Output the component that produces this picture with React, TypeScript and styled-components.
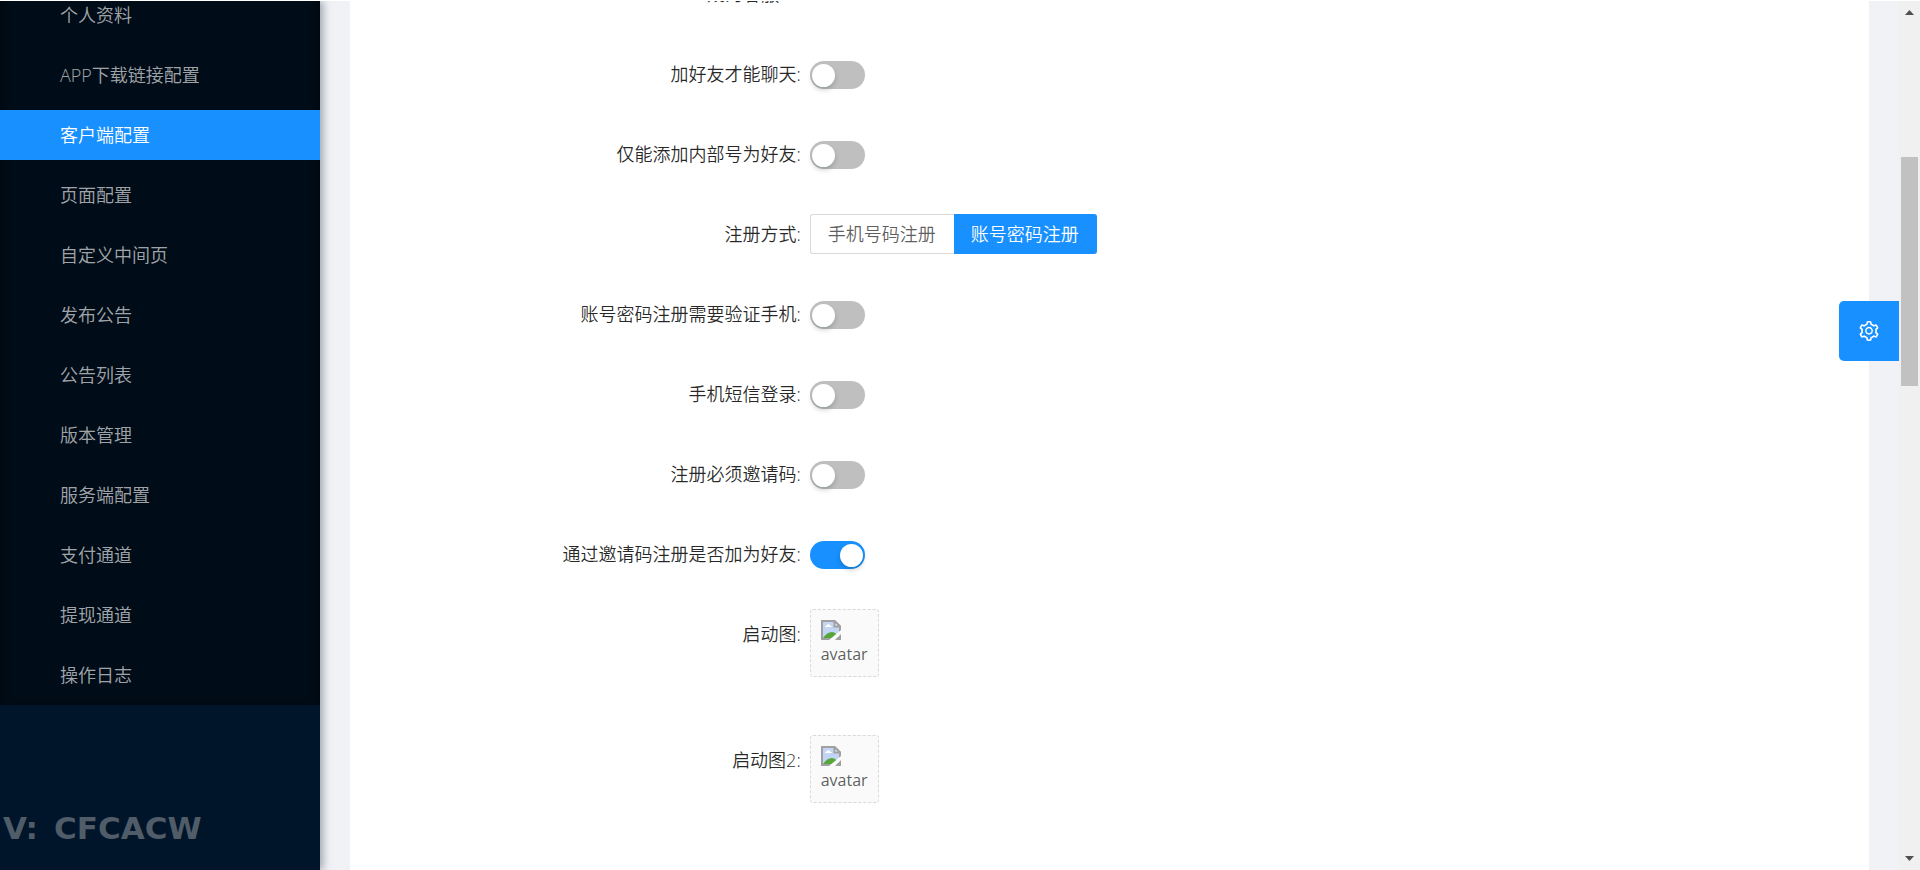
import React from 'react';
import styled, { createGlobalStyle } from 'styled-components';

const GlobalStyle = createGlobalStyle`
  *, *::before, *::after { box-sizing: border-box; }
  body {
    margin: 0;
    background: #fff;
    overflow: hidden;
    font-family: "Open Sans", "Noto Sans CJK SC", sans-serif;
    font-weight: 350;
    font-size: 18px;
    line-height: 28px;
    color: rgba(0, 0, 0, 0.65);
  }
`;

const Shell = styled.div`
  display: grid;
  grid-template-columns: 320px minmax(0, 1fr) 21px;
  height: 100vh;
  border-top: 1px solid #fff;
  overflow: hidden;
`;

const Sidebar = styled.aside`
  position: relative;
  z-index: 1;
  display: flex;
  flex-direction: column;
  justify-content: space-between;
  min-height: 0;
  background: #001529;
  box-shadow: 3px 0 8px rgba(0, 21, 41, 0.35);
`;

const MenuViewport = styled.nav`
  overflow: hidden;
`;

const MenuList = styled.ul`
  list-style: none;
  margin: -16px 0 0;
  padding: 0;
  background: #000c17;
  box-shadow: inset 0 3px 10px rgba(0, 0, 0, 0.45);
`;

const MenuItem = styled.li`
  padding: 5px 0;
`;

const MenuLink = styled.a<{ $active?: boolean }>`
  display: block;
  padding-left: 60px;
  line-height: 50px;
  text-decoration: none;
  white-space: nowrap;
  color: ${(p) => (p.$active ? '#fff' : 'rgba(255, 255, 255, 0.65)')};
  background: ${(p) => (p.$active ? '#1890ff' : 'transparent')};
`;

const Watermark = styled.p`
  display: flex;
  gap: 16px;
  margin: 0 0 22px 3px;
  font: bold 31px/40px "DejaVu Sans", sans-serif;
  color: #505d69;
`;

const Content = styled.main`
  min-width: 0;
  padding: 0 30px;
  background: #f0f2f5;
  overflow: hidden;
`;

const Card = styled.form`
  min-height: 100%;
  padding: 0 40px;
  background: #fff;
  overflow: hidden;
`;

const Rows = styled.div`
  display: grid;
  row-gap: 30px;
  margin-top: -32px;
`;

const Row = styled.div`
  display: grid;
  grid-template-columns: 7fr 17fr;
  align-items: start;
`;

const Label = styled.label`
  padding-right: 9px;
  line-height: 50px;
  text-align: right;
  white-space: nowrap;
  color: rgba(0, 0, 0, 0.85);
  &::after { content: ":"; }
`;

const Control = styled.div`
  display: flex;
  align-items: center;
  min-height: 50px;
`;

const Switch = styled.input`
  appearance: none;
  display: flex;
  align-items: center;
  width: 55px;
  height: 28px;
  margin: 2px 0 0;
  padding: 2px;
  border-radius: 14px;
  background: #bfbfbf;
  cursor: pointer;
  &::before {
    content: "";
    width: 23px;
    height: 23px;
    border-radius: 50%;
    background: #fff;
    box-shadow: 0 3px 5px rgba(0, 35, 11, 0.2);
  }
  &:checked { justify-content: flex-end; background: #1890ff; }
`;

const Segments = styled.div`
  display: flex;
  height: 40px;
`;

const Segment = styled.button<{ $active?: boolean }>`
  padding: 0 18px 0 17px;
  font: inherit;
  white-space: nowrap;
  cursor: pointer;
  border: 1px solid ${(p) => (p.$active ? '#1890ff' : '#d9d9d9')};
  border-width: ${(p) => (p.$active ? '1px 0' : '1px 0 1px 1px')};
  border-radius: ${(p) => (p.$active ? '0 3px 3px 0' : '3px 0 0 3px')};
  background: ${(p) => (p.$active ? '#1890ff' : '#fff')};
  color: ${(p) => (p.$active ? '#fff' : 'rgba(0, 0, 0, 0.65)')};
`;

const Upload = styled.button`
  display: flex;
  flex-direction: column;
  align-items: flex-start;
  height: 68px;
  margin-bottom: 28px;
  padding: 10px;
  font: inherit;
  font-size: 16px;
  font-weight: 400;
  line-height: 28px;
  color: rgba(0, 0, 0, 0.65);
  border: 1px dashed #d9d9d9;
  border-radius: 3px;
  background: #fafafa;
  cursor: pointer;
  svg { flex: none; }
`;

const SettingsButton = styled.button`
  position: fixed;
  z-index: 2;
  top: 301px;
  right: 21px;
  display: grid;
  place-items: center;
  width: 60px;
  height: 60px;
  padding: 0;
  border: 0;
  border-radius: 5px 0 0 5px;
  background: #1890ff;
  cursor: pointer;
`;

const ScrollTrack = styled.div`
  display: flex;
  flex-direction: column;
  align-items: center;
  padding: 9px 0;
  background: #f0f0f0;
`;

const ScrollThumb = styled.div`
  width: 17px;
  height: 229px;
  margin: 142px 0 auto;
  background: #c1c1c1;
`;

const menu = [
  '个人资料', 'APP下载链接配置', '客户端配置', '页面配置', '自定义中间页', '发布公告',
  '公告列表', '版本管理', '服务端配置', '支付通道', '提现通道', '操作日志',
];

function SwitchRow({ id, label, on }: { id: string; label: string; on?: boolean }) {
  return (
    <Row>
      <Label htmlFor={id}>{label}</Label>
      <Control><Switch id={id} type="checkbox" role="switch" defaultChecked={on} /></Control>
    </Row>
  );
}

function BrokenImage() {
  return (
    <svg width="20" height="20" viewBox="0 0 20 20" aria-hidden="true">
      <path d="M1 1h12.500L19 6.500V19H1z" fill="#c3d5f5" stroke="#a0a0a0" strokeWidth="2" />
      <path d="M4 7q0-1.500 1.500-1.500Q6.500 3.500 8.500 4.500q1 .5 1 1.500Q11 6 11 7z" fill="#fff" />
      <path d="M2 18q4-6 9-6 4 0 7 6z" fill="#57a639" />
      <path d="M13.500 1v5.500H19z" fill="#fff" stroke="#a0a0a0" strokeWidth="2" />
      <path d="M20 10v4l-6 6H8z" fill="#fafafa" />
    </svg>
  );
}

function UploadRow({ id, label }: { id: string; label: string }) {
  return (
    <Row>
      <Label htmlFor={id}>{label}</Label>
      <Control><Upload id={id} type="button"><BrokenImage />avatar</Upload></Control>
    </Row>
  );
}

function Gear() {
  return (
    <svg width="20" height="20" viewBox="64 64 896 896" fill="#fff" aria-hidden="true">
      <path d="M924.8 625.7l-65.5-56c3.1-19 4.7-38.4 4.7-57.8s-1.6-38.8-4.7-57.8l65.5-56a32.03 32.03 0 0 0 9.3-35.2l-.9-2.6a443.74 443.74 0 0 0-79.7-137.9l-1.8-2.1a32.12 32.12 0 0 0-35.1-9.5l-81.3 28.9c-30-24.6-63.5-44-99.7-57.6l-15.7-85a32.05 32.05 0 0 0-25.8-25.7l-2.7-.5c-52.1-9.4-106.9-9.4-159 0l-2.7.5a32.05 32.05 0 0 0-25.8 25.7l-15.8 85.4a351.86 351.86 0 0 0-99 57.4l-81.9-29.1a32 32 0 0 0-35.1 9.5l-1.8 2.1a446.02 446.02 0 0 0-79.7 137.9l-.9 2.6c-4.5 12.5-.8 26.5 9.3 35.2l66.3 56.6c-3.1 18.8-4.6 38-4.6 57.1 0 19.2 1.5 38.4 4.6 57.1L99 625.500a32.03 32.03 0 0 0-9.3 35.200l.9 2.600c18.100 50.400 44.900 96.900 79.700 137.900l1.800 2.100a32.120 32.120 0 0 0 35.100 9.500l81.900-29.100c29.800 24.500 63.100 43.900 99 57.400l15.800 85.400a32.050 32.050 0 0 0 25.800 25.700l2.700.5a449.400 449.400 0 0 0 159 0l2.700-.5a32.050 32.050 0 0 0 25.800-25.700l15.700-85a350 350 0 0 0 99.700-57.600l81.300 28.900a32 32 0 0 0 35.100-9.500l1.800-2.100c34.800-41.100 61.600-87.500 79.700-137.900l.9-2.600c4.500-12.300.8-26.300-9.300-35zM788.300 465.900c2.500 15.100 3.800 30.600 3.800 46.100s-1.300 31-3.800 46.100l-6.600 40.100 74.700 63.900a370.030 370.030 0 0 1-42.600 73.600L721 702.800l-31.400 25.800c-23.900 19.600-50.500 35-79.300 45.800l-38.100 14.300-17.900 97a377.500 377.500 0 0 1-85 0l-17.900-97.200-37.800-14.500c-28.500-10.800-55-26.200-78.700-45.700l-31.400-25.900-93.400 33.200c-17-22.900-31.200-47.600-42.600-73.600l75.500-64.500-6.500-40c-2.400-14.900-3.700-30.300-3.700-45.500 0-15.300 1.200-30.600 3.700-45.500l6.500-40-75.500-64.500c11.300-26.100 25.600-50.700 42.600-73.600l93.400 33.200 31.400-25.900c23.700-19.500 50.200-34.900 78.700-45.700l37.900-14.300 17.900-97.200c28.100-3.200 56.800-3.200 85 0l17.900 97 38.100 14.300c28.700 10.800 55.400 26.200 79.300 45.800l31.400 25.800 92.800-32.900c17 22.900 31.200 47.600 42.600 73.600L781.800 426l6.500 39.900zM512 326c-97.200 0-176 78.800-176 176s78.800 176 176 176 176-78.800 176-176-78.800-176-176-176zm79.200 255.200A111.600 111.600 0 0 1 512 614c-29.900 0-58-11.700-79.200-32.800A111.600 111.600 0 0 1 400 502c0-29.900 11.700-58 32.800-79.200C454 401.600 482.100 390 512 390c29.900 0 58 11.600 79.200 32.800A111.600 111.600 0 0 1 624 502c0 29.900-11.700 58-32.800 79.200z" />
    </svg>
  );
}

export default function App() {
  return (
    <>
      <GlobalStyle />
      <Shell>
        <Sidebar>
          <MenuViewport>
            <MenuList>
              {menu.map((name) => (
                <MenuItem key={name}>
                  <MenuLink href="#" $active={name === '客户端配置'}>{name}</MenuLink>
                </MenuItem>
              ))}
            </MenuList>
          </MenuViewport>
          <Watermark><span>V:</span><span>CFCACW</span></Watermark>
        </Sidebar>
        <Content>
          <Card>
            <Rows>
              <Row><Label as="span">成为客服ID</Label></Row>
              <SwitchRow id="friend-chat" label="加好友才能聊天" />
              <SwitchRow id="internal-only" label="仅能添加内部号为好友" />
              <Row>
                <Label as="span" id="register-mode">注册方式</Label>
                <Control>
                  <Segments role="group" aria-labelledby="register-mode">
                    <Segment type="button">手机号码注册</Segment>
                    <Segment type="button" $active>账号密码注册</Segment>
                  </Segments>
                </Control>
              </Row>
              <SwitchRow id="verify-phone" label="账号密码注册需要验证手机" />
              <SwitchRow id="sms-login" label="手机短信登录" />
              <SwitchRow id="invite-required" label="注册必须邀请码" />
              <SwitchRow id="invite-friend" label="通过邀请码注册是否加为好友" on />
              <UploadRow id="splash-1" label="启动图" />
              <UploadRow id="splash-2" label="启动图2" />
            </Rows>
          </Card>
        </Content>
        <ScrollTrack aria-hidden="true">
          <svg width="9" height="5" viewBox="0 0 9 5"><path d="M0 5 4.500 0 9 5z" fill="#505050" /></svg>
          <ScrollThumb />
          <svg width="9" height="5" viewBox="0 0 9 5"><path d="M0 0h9L4.500 5z" fill="#505050" /></svg>
        </ScrollTrack>
      </Shell>
      <SettingsButton type="button" aria-label="设置"><Gear /></SettingsButton>
    </>
  );
}
